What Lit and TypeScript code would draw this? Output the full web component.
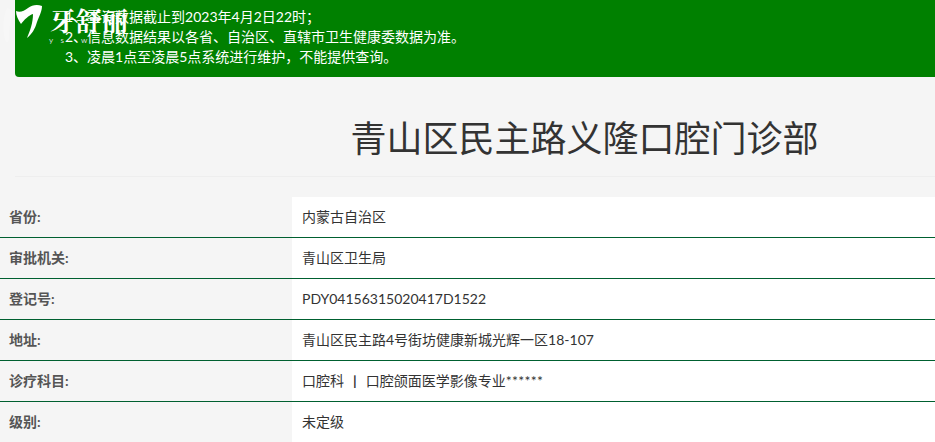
import { LitElement, html, css } from "lit";
import { customElement } from "lit/decorators.js";

const rows: [string, unknown][] = [
  ["省份:", "内蒙古自治区"],
  ["审批机关:", "青山区卫生局"],
  ["登记号:", "PDY04156315020417D1522"],
  ["地址:", "青山区民主路4号街坊健康新城光辉一区18-107"],
  ["诊疗科目:", html`口腔科 <b class="sep">&nbsp;|&nbsp;</b> 口腔颌面医学影像专业<span class="stars">******</span>`],
  ["级别:", "未定级"],
];

@customElement("app-root")
export class AppRoot extends LitElement {
  static styles = css`
    :host {
      display: block;
      width: 935px;
      height: 442px;
      overflow: hidden;
      position: relative;
      background: #f5f5f5;
      color: #333;
      font-family: "Lato", "Noto Sans CJK SC", sans-serif;
      font-size: 14px;
    }
    .alert {
      margin-left: 15px;
      height: 77px;
      box-sizing: border-box;
      padding: 7px 0 0 50px;
      background: #008000;
      color: #fff;
      border-radius: 0 0 0 4px;
      line-height: 20px;
    }
    .logo {
      position: absolute;
      left: 0;
      top: 0;
      width: 135px;
      height: 48px;
      color: #fff;
    }
    .logo svg {
      position: absolute;
      left: 0;
      top: 0;
    }
    .brand {
      position: absolute;
      left: 50px;
      top: 3px;
      font-family: "Noto Serif CJK SC", "Noto Sans CJK SC", serif;
      font-size: 26px;
      line-height: 34px;
      font-weight: 700;
      white-space: nowrap;
    }
    .pin {
      position: absolute;
      left: 49px;
      top: 34px;
      font-size: 8px;
      line-height: 12px;
      letter-spacing: 2.75px;
      white-space: pre;
      color: #ddd;
    }
    .head {
      margin: 21px 0 20px 15px;
      height: 79px;
      box-sizing: border-box;
      border-bottom: 1px solid #eee;
      text-align: center;
    }
    h1 {
      margin: 0;
      padding: 20px 0 0 219px;
      font-size: 36px;
      line-height: 40px;
      font-weight: 400;
      color: #333;
    }
    .row {
      display: grid;
      grid-template-columns: 292px 1fr;
      height: 41px;
      box-sizing: border-box;
      border-bottom: 1px solid #006030;
    }
    .row:last-child {
      border-bottom: 0;
    }
    .k {
      padding-left: 9px;
      font-weight: 700;
      color: #555;
      line-height: 40px;
    }
    .v {
      padding-left: 10px;
      background: #fff;
      line-height: 40px;
    }
    .sep {
      font-weight: 700;
      margin: 0 2px;
    }
    .stars {
      letter-spacing: 0.3px;
    }
  `;

  render() {
    return html`
      <div class="alert">
        <div>1、查询数据截止到2023年4月2日22时；</div>
        <div>2、信息数据结果以各省、自治区、直辖市卫生健康委数据为准。</div>
        <div>3、凌晨1点至凌晨5点系统进行维护，不能提供查询。</div>
      </div>
      <div class="logo">
        <svg width="46" height="46" viewBox="0 0 46 46">
          <path fill="rgba(255,255,255,.22)" d="M7 8C3 16 2 28 5 40C7 44 9 43 9 38C9 28 11 18 14 12C12 10 9 8 7 8Z" />
          <path fill="#fff" d="M16 11C20 13 24 11 28 8C32 5 37 4 42 6C42 11 39 17 37 22C35 29 32 34 27 38C30 31 33 23 33 14C29 15 24 20 21 24C18 20 16 15 16 11Z" />
        </svg>
        <div class="brand">牙舒丽</div>
        <div class="pin">y s   w</div>
      </div>
      <div class="head"><h1>青山区民主路义隆口腔门诊部</h1></div>
      ${rows.map(
        ([k, v]) => html`<div class="row"><div class="k">${k}</div><div class="v">${v}</div></div>`
      )}
    `;
  }
}
